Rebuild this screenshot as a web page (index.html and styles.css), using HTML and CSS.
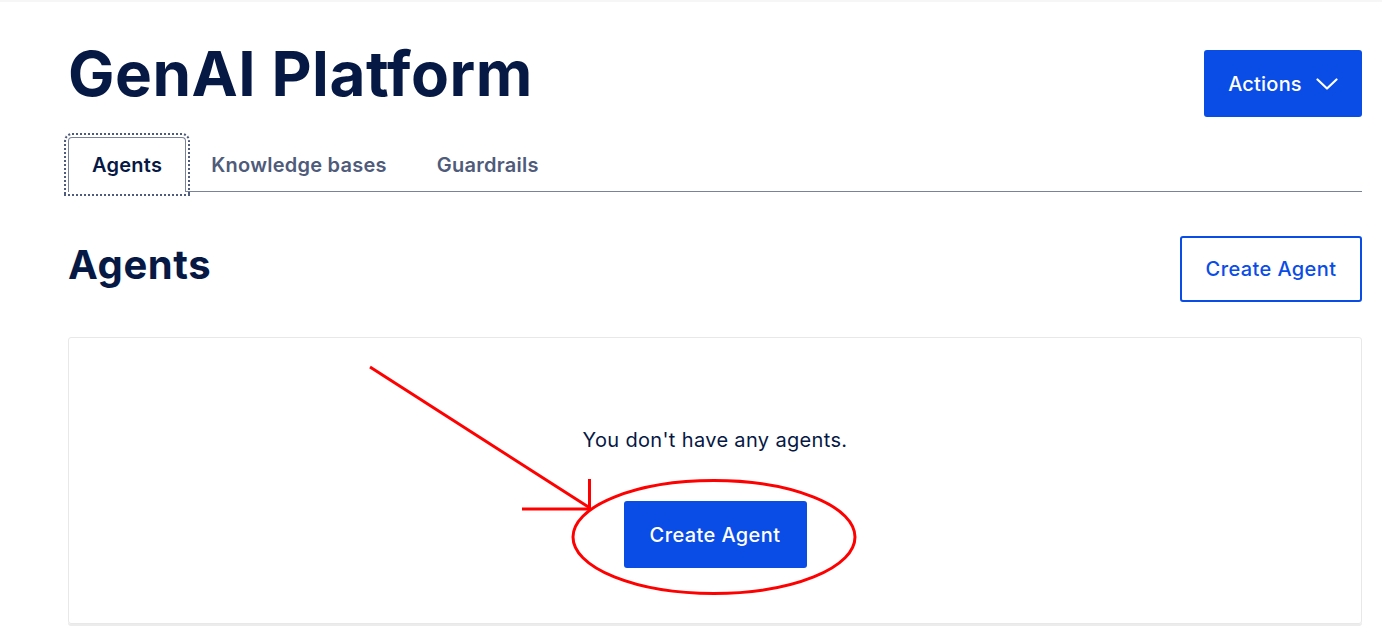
FILE: index.html
```html
<!DOCTYPE html>
<html lang="en">
<head>
<meta charset="utf-8">
<title>GenAI Platform</title>
<link rel="stylesheet" href="styles.css">
</head>
<body>
<div class="page">
  <header class="page-header">
    <h1 class="page-title">GenAI Platform</h1>
    <button class="btn btn-primary btn-actions" type="button">
      <span>Actions</span>
      <svg class="chevron" width="22" height="12" viewBox="0 0 22 12" aria-hidden="true"><path d="M1.5 1.5 L11 10.5 L20.5 1.5" fill="none" stroke="#fff" stroke-width="2.2" stroke-linecap="round" stroke-linejoin="round"/></svg>
    </button>
  </header>

  <nav class="tabs">
    <a class="tab tab-active">Agents</a>
    <a class="tab">Knowledge bases</a>
    <a class="tab">Guardrails</a>
  </nav>

  <section class="section">
    <div class="section-header">
      <h2 class="section-title">Agents</h2>
      <button class="btn btn-outline" type="button">Create Agent</button>
    </div>
    <div class="card">
      <p class="empty-text">You don't have any agents.</p>
      <button class="btn btn-primary btn-create" type="button">Create Agent</button>
    </div>
  </section>
</div>

<svg class="annotation" width="1382" height="632" viewBox="0 0 1382 632" aria-hidden="true">
  <g stroke="#ff0000" stroke-width="3" fill="none" stroke-linecap="butt">
    <line x1="370" y1="365" x2="590" y2="506"/>
    <line x1="522" y1="507" x2="590" y2="507"/>
    <line x1="589.5" y1="477" x2="589.5" y2="507"/>
    <ellipse cx="714" cy="535" rx="141" ry="56.5"/>
  </g>
</svg>
</body>
</html>
```

FILE: styles.css
```css
* { box-sizing: border-box; }

html, body {
  margin: 0;
  padding: 0;
  background: #ffffff;
}

body {
  font-family: Inter, "Open Sans", "Liberation Sans", sans-serif;
  color: #031b4e;
  border-top: 2px solid #f6f6f6;
  position: relative;
  min-height: 632px;
  overflow: hidden;
}

.page {
  padding: 0 20px 0 68px;
}

.page-header {
  display: flex;
  justify-content: space-between;
  align-items: flex-start;
}

.page-title {
  margin: 36px 0 0 0;
  font-size: 62px;
  line-height: 72px;
  font-weight: 700;
  letter-spacing: 0.5px;
  color: #061844;
}

.btn {
  font-family: inherit;
  font-size: 20px;
  font-weight: 500;
  letter-spacing: 0.4px;
  border-radius: 3px;
  cursor: pointer;
  display: inline-flex;
  align-items: center;
  justify-content: center;
}

.btn-primary {
  background: #0a4ce6;
  color: #ffffff;
  border: none;
}

.btn-actions {
  margin-top: 48px;
  width: 158px;
  height: 67px;
  gap: 14px;
  letter-spacing: 0.2px;
}

.chevron { display: block; }

.btn-outline {
  background: #ffffff;
  color: #0a4ce6;
  border: 2px solid #0a4ce6;
  width: 182px;
  height: 66px;
}

.tabs {
  display: flex;
  margin-top: 17px;
  border-bottom: 1px solid #7a819b;
  height: 58px;
}

.tab {
  padding: 0 25px;
  font-size: 20px;
  font-weight: 600;
  letter-spacing: 0.25px;
  color: #4f5b7a;
  display: flex;
  align-items: center;
  height: 55px;
  margin-top: 3px;
}

.tab-active {
  padding: 0 23px;
  color: #061844;
  border: 1px solid #7a819b;
  border-bottom: none;
  border-radius: 4px 4px 0 0;
  background: #ffffff;
  height: 55px;
  margin-top: 3px;
  margin-bottom: -1px;
  outline: 2px dotted #4f5b7a;
  outline-offset: 2px;
}

.section {
  margin-top: 44px;
}

.section-header {
  display: flex;
  justify-content: space-between;
  align-items: flex-start;
}

.section-title {
  margin: 2px 0 0 0;
  font-size: 40px;
  line-height: 54px;
  font-weight: 700;
  color: #061844;
  letter-spacing: 0.6px;
}

.card {
  margin-top: 35px;
  height: 287px;
  border: 1px solid #e8e8e8;
  border-radius: 3px;
  box-shadow: 0 2px 0 #ececec;
  display: flex;
  flex-direction: column;
  align-items: center;
  padding-top: 88px;
}

.empty-text {
  margin: 0;
  font-size: 20px;
  line-height: 28px;
  letter-spacing: 0.35px;
  color: #061844;
}

.btn-create {
  margin-top: 47px;
  width: 183px;
  height: 67px;
}

.annotation {
  position: absolute;
  top: 0;
  left: 0;
  pointer-events: none;
}
```
